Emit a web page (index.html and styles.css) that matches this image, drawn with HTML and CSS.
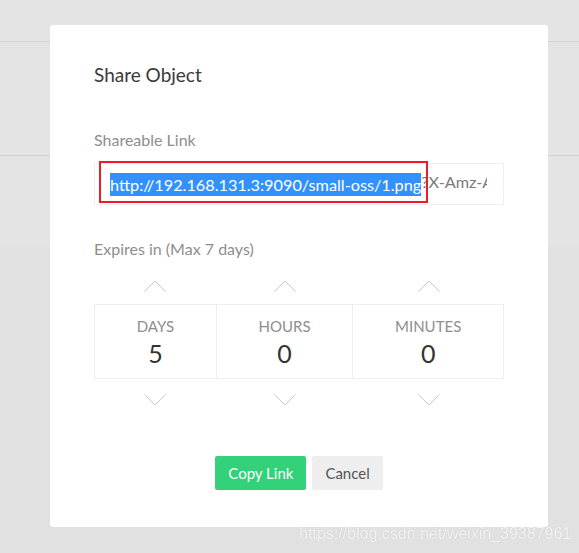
FILE: index.html
```html
<!DOCTYPE html>
<html>
<head>
<meta charset="utf-8">
<link rel="stylesheet" href="styles.css">
</head>
<body>
<div class="page">
  <div class="band band-top"></div>
  <div class="band band-mid"></div>
  <div class="band band-low"></div>
  <div class="band band-bottom"></div>
</div>

<div class="modal">
  <h4 class="title">Share Object</h4>
  <label class="label label-link">Shareable Link</label>
  <div class="link-input">
    <div class="link-clip"><span class="sel">http://192.168.131.3:9090/small-oss/1.png</span>?X-Amz-Algorithm=AWS4-HMAC-SHA256&amp;X-Amz-Credential</div>
  </div>
  <div class="annot"></div>

  <label class="label label-exp">Expires in (Max 7 days)</label>
  <div class="expiry">
    <div class="col col-first">
      <svg class="chev chev-up" width="22" height="12" viewBox="0 0 22 12"><polyline points="0.5,11.5 11,1 21.5,11.5"/></svg>
      <div class="cell"><div class="unit">Days</div><div class="val">5</div></div>
      <svg class="chev chev-down" width="22" height="12" viewBox="0 0 22 12"><polyline points="0.5,0.5 11,11 21.5,0.5"/></svg>
    </div>
    <div class="col">
      <svg class="chev chev-up" width="22" height="12" viewBox="0 0 22 12"><polyline points="0.5,11.5 11,1 21.5,11.5"/></svg>
      <div class="cell"><div class="unit">Hours</div><div class="val">0</div></div>
      <svg class="chev chev-down" width="22" height="12" viewBox="0 0 22 12"><polyline points="0.5,0.5 11,11 21.5,0.5"/></svg>
    </div>
    <div class="col">
      <svg class="chev chev-up" width="22" height="12" viewBox="0 0 22 12"><polyline points="0.5,11.5 11,1 21.5,11.5"/></svg>
      <div class="cell"><div class="unit">Minutes</div><div class="val">0</div></div>
      <svg class="chev chev-down" width="22" height="12" viewBox="0 0 22 12"><polyline points="0.5,0.5 11,11 21.5,0.5"/></svg>
    </div>
  </div>

  <div class="actions">
    <button class="btn btn-copy">Copy Link</button>
    <button class="btn btn-cancel">Cancel</button>
  </div>
</div>

<div class="watermark">https://blog.csdn.net/weixin_39387961</div>
</body>
</html>
```

FILE: styles.css
```css
* { box-sizing: border-box; }
html, body {
  margin: 0;
  padding: 0;
  width: 579px;
  height: 553px;
  overflow: hidden;
}
body {
  background: #e1e1e1;
  font-family: Lato, "Open Sans", sans-serif;
  position: relative;
}
.page {
  display: flex;
  flex-direction: column;
}
.band { background: #e4e4e4; }
.band-top { height: 42px; border-bottom: 1px solid #d2d2d2; }
.band-mid { height: 114px; border-bottom: 1px solid #d2d2d2; }
.band-low { height: 90px; }
.band-bottom { height: 307px; background: #e1e1e1; }

.modal {
  position: absolute;
  left: 50px;
  top: 25px;
  width: 498px;
  height: 502px;
  background: #fff;
  border-radius: 3px;
  padding: 39px 44px 0 44px;
  display: flex;
  flex-direction: column;
}
.title {
  margin: 0;
  font-size: 19px;
  line-height: 22px;
  font-weight: 400;
  color: #3a3a3a;
}
.label {
  display: block;
  font-size: 16px;
  line-height: 18px;
  color: #8e8e8e;
}
.label-link { margin-top: 45px; }
.link-input {
  margin-top: 14px;
  height: 42px;
  border: 1px solid #eee;
  padding: 0 16px 0 15px;
  display: flex;
  align-items: center;
}
.link-clip {
  overflow: hidden;
  white-space: nowrap;
  font-size: 16.25px;
  color: #7a7a7a;
  width: 100%;
}
.sel {
  display: inline-block;
  height: 23px;
  line-height: 23px;
  background: #3390ff;
  color: #fff;
  vertical-align: middle;
}
.annot {
  position: absolute;
  left: 49px;
  top: 136px;
  width: 329px;
  height: 42px;
  border: 2px solid #ee1c24;
}
.label-exp { margin-top: 35px; }

.expiry {
  display: flex;
  margin-top: 22px;
}
.col {
  flex: 1 1 auto;
  display: flex;
  flex-direction: column;
  align-items: stretch;
}
.chev {
  display: block;
  align-self: center;
  fill: none;
  stroke: #c9c9c9;
  stroke-width: 1;
}
.chev-up { margin-bottom: 12px; }
.chev-down { margin-top: 15px; }
.cell {
  height: 75px;
  border-top: 1px solid #eee;
  border-bottom: 1px solid #eee;
  border-right: 1px solid #eee;
  padding: 13px 20px 0;
  text-align: center;
}
.col-first .cell { border-left: 1px solid #eee; }
.unit {
  font-size: 15px;
  line-height: 17px;
  text-transform: uppercase;
  color: #8e8e8e;
}
.val {
  margin-top: 3px;
  font-size: 25px;
  line-height: 30px;
  color: #333;
}

.actions {
  margin-top: 50px;
  display: flex;
  justify-content: center;
  gap: 6px;
}
.btn {
  height: 34px;
  border: 0;
  border-radius: 2px;
  font-family: Lato, "Open Sans", sans-serif;
  font-size: 15px;
  padding: 0 13px;
}
.btn-copy { background: #33d17a; color: #fff; }
.btn-cancel { background: #eeeeee; color: #555; }

.watermark {
  position: absolute;
  left: 299px;
  top: 524px;
  font-family: "Liberation Sans", Arial, sans-serif;
  font-size: 16px;
  line-height: 20px;
  color: rgba(255, 255, 255, 0.85);
  text-shadow: 0 0 1px rgba(0, 0, 0, 0.18);
  white-space: nowrap;
}
```
